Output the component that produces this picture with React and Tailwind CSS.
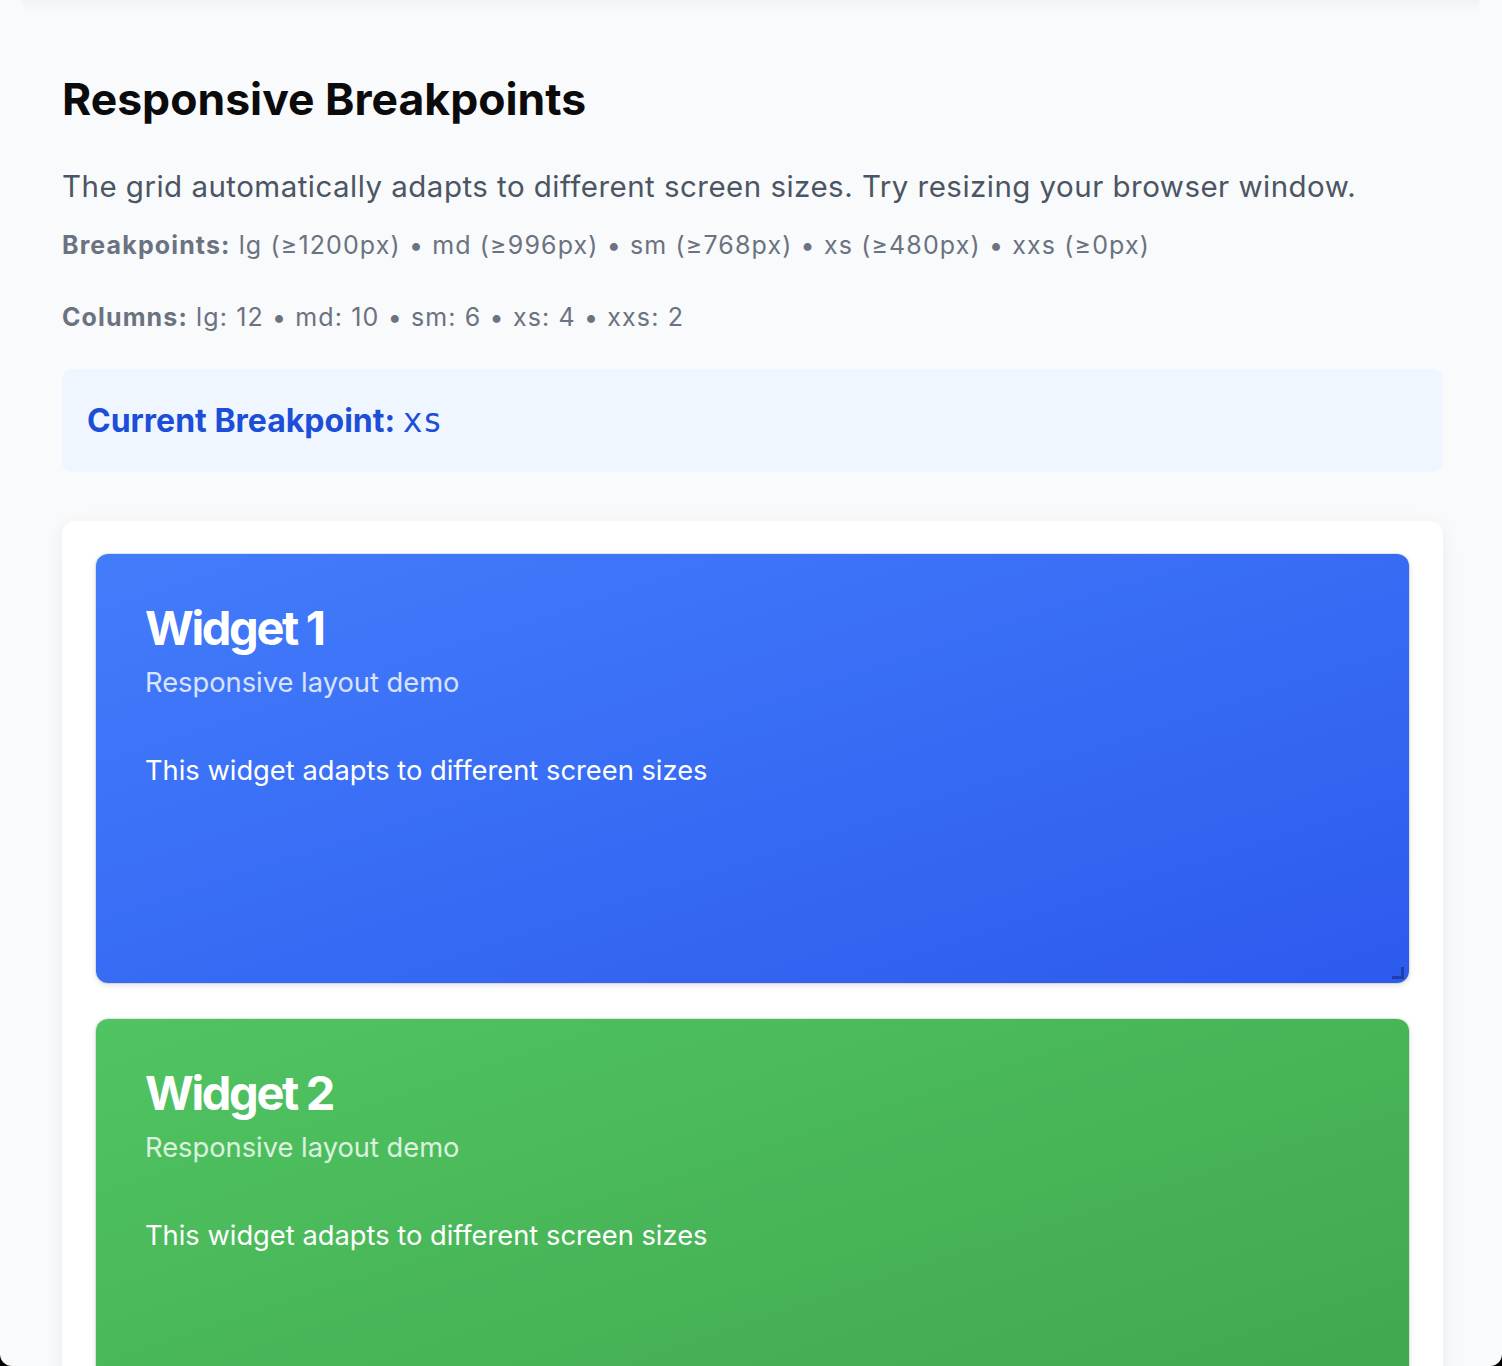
import React from "react";

const WIDGETS = [
  { id: 1, title: "Widget 1", bg: "bg-gradient-to-br from-[#437cfb] to-[#2d5aee]" },
  { id: 2, title: "Widget 2", bg: "bg-gradient-to-br from-[#50c462] to-[#3fa64c]" },
];

function Widget({ w }) {
  return (
    <div
      className={`relative h-[429px] shrink-0 rounded-[12px] ${w.bg} pl-[49px] pt-[45px] text-white shadow-[0_0_0_1px_rgba(0,0,0,0.08),0_2px_6px_rgba(0,0,0,0.12)]`}
    >
      <h3 className="text-[47px] leading-[58px] font-bold tracking-[-0.05em]">{w.title}</h3>
      <p className="mt-[8px] text-[27.3px] leading-[36px] text-white/80">Responsive layout demo</p>
      <p className="mt-[52px] text-[27.3px] leading-[36px]">This widget adapts to different screen sizes</p>
      {/* resize handle */}
      <span className="absolute right-[5px] bottom-[4px] h-[12px] w-[12px] border-r-[3px] border-b-[3px] border-black/30" />
    </div>
  );
}

export default function App() {
  return (
    <div className="h-[1366px] overflow-hidden bg-black" style={{ fontFamily: "Inter, 'Noto Sans', sans-serif" }}>
      <div className="h-full overflow-hidden rounded-b-[12px] bg-[#f8fafc]">
        {/* bottom of previous section shadow */}
        <div className="mx-[22px] h-[14px] rounded-b-[28px] bg-gradient-to-b from-[#f1f3f6] to-[#f8fafc]" />

        <div className="pl-[62px] pr-[59px] pt-[59px]">
          <h2 className="text-[44.5px] leading-[53px] font-bold text-[#0b0b0c]">Responsive Breakpoints</h2>
          <p className="mt-[40px] text-[29.5px] leading-[40px] tracking-[0.016em] text-[#4b5563]">
            The grid automatically adapts to different screen sizes. Try resizing your browser window.
          </p>
          <p className="mt-[23px] text-[25px] leading-[32px] tracking-[0.045em] text-[#6b7280]">
            <span className="font-bold">Breakpoints:</span> lg (≥1200px) • md (≥996px) • sm (≥768px) • xs
            (≥480px) • xxs (≥0px)
          </p>
          <p className="mt-[40px] text-[25px] leading-[32px] tracking-[0.045em] text-[#6b7280]">
            <span className="font-bold">Columns:</span> lg: 12 • md: 10 • sm: 6 • xs: 4 • xxs: 2
          </p>

          <div className="mt-[36px] flex h-[103px] items-center rounded-[10px] bg-[#eff6ff] px-[25px]">
            <p className="text-[32px] leading-[40px] font-bold text-[#1d4ed8]">
              Current Breakpoint:{" "}
              <span className="text-[33px] font-normal" style={{ fontFamily: "'DejaVu Sans Mono', monospace" }}>
                xs
              </span>
            </p>
          </div>

          <div className="mt-[49px] flex flex-col gap-[36px] rounded-[14px] bg-white px-[34px] pt-[33px] pb-[34px] shadow-[0_4px_20px_rgba(0,0,0,0.06)]">
            {WIDGETS.map((w) => (
              <Widget key={w.id} w={w} />
            ))}
          </div>
        </div>
      </div>
    </div>
  );
}
